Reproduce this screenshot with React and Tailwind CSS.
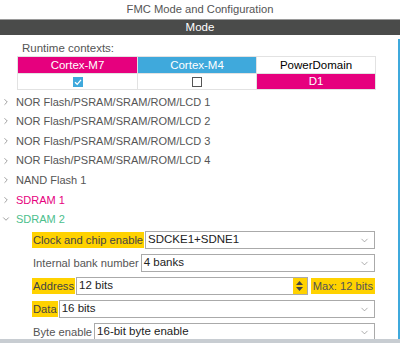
import { ChevronRight, ChevronDown } from 'lucide-react'

const FONT = { fontFamily: '"Liberation Sans", Arial, sans-serif' }

const TREE = [
  { label: 'NOR Flash/PSRAM/SRAM/ROM/LCD 1' },
  { label: 'NOR Flash/PSRAM/SRAM/ROM/LCD 2' },
  { label: 'NOR Flash/PSRAM/SRAM/ROM/LCD 3' },
  { label: 'NOR Flash/PSRAM/SRAM/ROM/LCD 4' },
  { label: 'NAND Flash 1' },
  { label: 'SDRAM 1', color: 'text-[#e6007e]' },
]

function Select({ value, className = '' }) {
  return (
    <div
      className={`flex h-[18px] flex-1 items-center border border-[#aaa] bg-white pl-[2px] pr-[4px] text-[11.5px] text-[#222] ${className}`}
    >
      <span className="flex-1 leading-none">{value}</span>
      <ChevronDown className="h-[11px] w-[11px] text-[#888]" strokeWidth={1.5} />
    </div>
  )
}

function Label({ text, hi }) {
  return (
    <span
      className={`mr-[1px] px-[1px] text-[11.2px] leading-[16px] ${hi ? 'bg-[#ffd200] text-[#444]' : 'text-[#555]'}`}
    >
      {text}
    </span>
  )
}

export default function App() {
  return (
    <div className="relative h-[343px] w-[400px] overflow-hidden bg-white" style={FONT}>
      <div className="h-[19px] pt-[2px] text-center text-[11.2px] leading-[15px] text-[#555]">
        FMC Mode and Configuration
      </div>
      <div className="h-[16px] border-t border-[#9a9a9a] bg-[#4a4b4a] text-center text-[11.5px] leading-[15px] text-white">
        Mode
      </div>

      <div className="flex">
        <div className="flex-1">
          <div className="pl-[22px] pt-[6px] text-[11.5px] leading-[14px] text-[#555]">Runtime contexts:</div>

          {/* contexts table */}
          <div className="ml-[17px] mt-[1px] w-[359px] border border-[#e2e2e2] text-[11.5px]">
            <div className="grid h-[16px] grid-cols-3">
              <div className="bg-[#e6007e] text-center leading-[16px] text-white">Cortex-M7</div>
              <div className="border-l border-[#e2e2e2] bg-[#3fa9dc] text-center leading-[16px] text-white">Cortex-M4</div>
              <div className="border-l border-[#e2e2e2] bg-white text-center leading-[16px] text-black">PowerDomain</div>
            </div>
            <div className="grid h-[16px] grid-cols-3 border-t border-[#e2e2e2]">
              <div className="flex items-center justify-center">
                <div className="flex h-[10px] w-[10px] items-center justify-center bg-[#3fa9dc]">
                  <svg width="8" height="8" viewBox="0 0 8 8">
                    <path d="M1 4.2 L3.2 6.3 L7 1.8" fill="none" stroke="white" strokeWidth="1.3" />
                  </svg>
                </div>
              </div>
              <div className="flex items-center justify-center border-l border-[#e2e2e2]">
                <div className="h-[10px] w-[10px] border border-[#555] bg-white" />
              </div>
              <div className="border-l border-[#e2e2e2] bg-[#e6007e] text-center leading-[15px] text-white">D1</div>
            </div>
          </div>

          {/* tree */}
          <div className="mt-[2px]">
            {TREE.map((t) => (
              <div key={t.label} className="flex h-[19.6px] items-center">
                <ChevronRight className="ml-[1px] h-[10px] w-[10px] text-[#666]" strokeWidth={1.5} />
                <span className={`ml-[5px] text-[11px] ${t.color || 'text-[#555]'}`}>{t.label}</span>
              </div>
            ))}
            <div className="flex h-[19.6px] items-center">
              <ChevronDown className="ml-[1px] h-[10px] w-[10px] text-[#666]" strokeWidth={1.5} />
              <span className="ml-[5px] text-[11px] text-[#4cc08d]">SDRAM 2</span>
            </div>
          </div>

          {/* SDRAM 2 settings */}
          <div className="mr-[23px] flex flex-col gap-[5px] pl-[32px] pt-[2px]">
            <div className="flex items-center">
              <Label text="Clock and chip enable" hi />
              <Select value="SDCKE1+SDNE1" />
            </div>
            <div className="flex items-center">
              <Label text="Internal bank number" />
              <Select value="4 banks" />
            </div>
            <div className="flex items-center">
              <Label text="Address" hi />
              <div className="flex h-[18px] flex-1 items-center border border-[#aaa] bg-white pl-[2px] text-[11.5px] text-[#222]">
                <span className="flex-1 leading-none">12 bits</span>
                <div className="flex h-full w-[14px] flex-col items-center justify-center gap-[2px] bg-[#ffd200]">
                  <svg width="7" height="4" viewBox="0 0 7 4"><path d="M0 4 L3.5 0 L7 4 Z" fill="#444" /></svg>
                  <svg width="7" height="4" viewBox="0 0 7 4"><path d="M0 0 L3.5 4 L7 0 Z" fill="#444" /></svg>
                </div>
              </div>
              <span className="ml-[3px] bg-[#ffd200] px-[2px] text-[11.2px] leading-[16px] text-[#555]">Max: 12 bits</span>
            </div>
            <div className="flex items-center">
              <Label text="Data" hi />
              <Select value="16 bits" />
            </div>
            <div className="flex items-center">
              <Label text="Byte enable" />
              <Select value="16-bit byte enable" />
            </div>
          </div>
        </div>
        <div className="mt-[4px] h-[300px] w-[2px] bg-[#3fa9dc]" />
      </div>

      <div className="absolute bottom-0 left-0 h-[4px] w-full bg-[#c8cdd2]" />
    </div>
  )
}
